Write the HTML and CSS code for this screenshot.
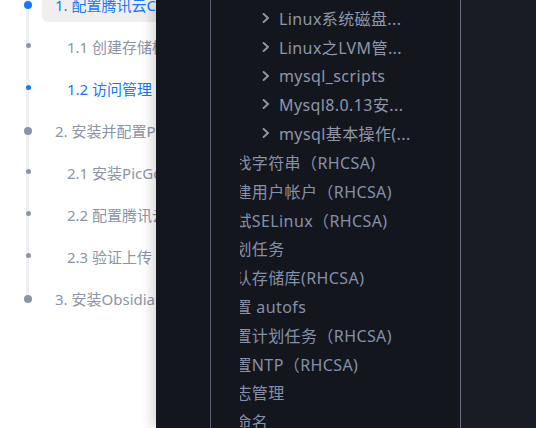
FILE: index.html
```html
<!DOCTYPE html>
<html lang="zh-CN">
<head>
<meta charset="utf-8">
<title>目录</title>
<link rel="stylesheet" href="styles.css">
</head>
<body>
<nav class="toc">
  <ul class="toc-list">
    <li class="toc-item top active"><span class="dot-col"><span class="dot"></span></span><a class="toc-link">1. 配置腾讯云COS</a></li>
    <li class="toc-item sub"><span class="dot-col"><span class="dot"></span></span><a class="toc-link">1.1 创建存储桶</a></li>
    <li class="toc-item sub current"><span class="dot-col"><span class="dot"></span></span><a class="toc-link">1.2 访问管理</a></li>
    <li class="toc-item top"><span class="dot-col"><span class="dot"></span></span><a class="toc-link">2. 安装并配置PicGo</a></li>
    <li class="toc-item sub"><span class="dot-col"><span class="dot"></span></span><a class="toc-link">2.1 安装PicGo</a></li>
    <li class="toc-item sub"><span class="dot-col"><span class="dot"></span></span><a class="toc-link">2.2 配置腾讯云图床</a></li>
    <li class="toc-item sub"><span class="dot-col"><span class="dot"></span></span><a class="toc-link">2.3 验证上传</a></li>
    <li class="toc-item top last"><span class="dot-col"><span class="dot"></span></span><a class="toc-link">3. 安装Obsidian插件</a></li>
  </ul>
</nav>

<aside class="drawer">
  <div class="gutter"></div>
  <div class="tree">
    <div class="tree-clip">
      <div class="row folder"><svg class="chev" viewBox="0 0 8 10" width="8" height="10"><path d="M1.6 1 L6 5 L1.6 9" /></svg><span class="label">Linux系统磁盘...</span></div>
      <div class="row folder"><svg class="chev" viewBox="0 0 8 10" width="8" height="10"><path d="M1.6 1 L6 5 L1.6 9" /></svg><span class="label">Linux之LVM管...</span></div>
      <div class="row folder"><svg class="chev" viewBox="0 0 8 10" width="8" height="10"><path d="M1.6 1 L6 5 L1.6 9" /></svg><span class="label">mysql_scripts</span></div>
      <div class="row folder"><svg class="chev" viewBox="0 0 8 10" width="8" height="10"><path d="M1.6 1 L6 5 L1.6 9" /></svg><span class="label">Mysql8.0.13安...</span></div>
      <div class="row folder"><svg class="chev" viewBox="0 0 8 10" width="8" height="10"><path d="M1.6 1 L6 5 L1.6 9" /></svg><span class="label">mysql基本操作(...</span></div>
      <div class="row leaf"><span class="label">查找字符串（RHCSA)</span></div>
      <div class="row leaf"><span class="label">创建用户帐户（RHCSA)</span></div>
      <div class="row leaf"><span class="label">测试SELinux（RHCSA)</span></div>
      <div class="row leaf"><span class="label">计划任务</span></div>
      <div class="row leaf"><span class="label">默认存储库(RHCSA)</span></div>
      <div class="row leaf"><span class="label">配置 autofs</span></div>
      <div class="row leaf"><span class="label">配置计划任务（RHCSA)</span></div>
      <div class="row leaf"><span class="label">配置NTP（RHCSA)</span></div>
      <div class="row leaf"><span class="label">日志管理</span></div>
      <div class="row leaf"><span class="label">重命名</span></div>
    </div>
  </div>
  <div class="side"></div>
</aside>
</body>
</html>
```

FILE: styles.css
```css
* { box-sizing: border-box; }

html, body {
  margin: 0;
  padding: 0;
  width: 536px;
  height: 428px;
  overflow: hidden;
  background: #ffffff;
  font-family: "Noto Sans", "Noto Sans CJK SC", sans-serif;
}

.toc {
  padding-left: 14px;
}

.toc-list {
  list-style: none;
  margin: -16px 0 0 0;
  padding: 0;
}

.toc-item {
  display: flex;
  align-items: center;
  height: 42px;
}

.dot-col {
  width: 28px;
  height: 42px;
  flex: none;
  display: flex;
  align-items: center;
  justify-content: center;
  background: linear-gradient(to right, transparent 12.5px, #eeeff2 12.5px, #eeeff2 15.5px, transparent 15.5px);
}

.toc-item.last .dot-col {
  background: linear-gradient(to right, transparent 12.5px, #eeeff2 12.5px, #eeeff2 15.5px, transparent 15.5px) top / 100% 50% no-repeat;
}

.dot {
  display: block;
  border-radius: 50%;
  background: #8b94a8;
}

.top .dot { width: 8px; height: 8px; }
.sub .dot { width: 5px; height: 5px; margin-top: -3px; }

.active .dot, .current .dot { background: #1677ff; }

.toc-link {
  display: block;
  width: 220px;
  height: 34px;
  line-height: 34px;
  padding-left: 13px;
  border-radius: 6px;
  font-size: 15px;
  color: #8b94a8;
  white-space: nowrap;
}

.sub .toc-link { padding-left: 25px; }

.active .toc-link {
  background: #efefef;
  color: #1677ff;
}

.current .toc-link { color: #1677ff; }

/* dark drawer overlaying the page */
.drawer {
  position: absolute;
  top: 0;
  left: 156px;
  right: 0;
  bottom: 0;
  display: flex;
  box-shadow: -5px 0 10px rgba(0, 0, 0, 0.14);
}

.gutter {
  width: 54px;
  flex: none;
  background: #14161e;
}

.tree {
  width: 251px;
  flex: none;
  background: #14161e;
  border-left: 1px solid #5d6273;
  border-right: 1px solid #6a6f80;
}

.tree-clip {
  margin-left: 29px;
  padding-top: 3.6px;
  overflow: hidden;
  height: 100%;
}

.side {
  flex: 1;
  background: #1a1c25;
}

.row {
  display: flex;
  align-items: center;
  height: 28.8px;
  white-space: nowrap;
  font-size: 16px;
  letter-spacing: 0.4px;
  color: #8f97a9;
}

.leaf { color: #8591ab; }

.folder { padding-left: 22px; }

.chev {
  flex: none;
  margin-right: 9px;
}

.chev path {
  fill: none;
  stroke: #8f97a9;
  stroke-width: 1.9;
  stroke-linecap: round;
  stroke-linejoin: round;
}

.leaf .label {
  margin-left: -21px;
}
```
